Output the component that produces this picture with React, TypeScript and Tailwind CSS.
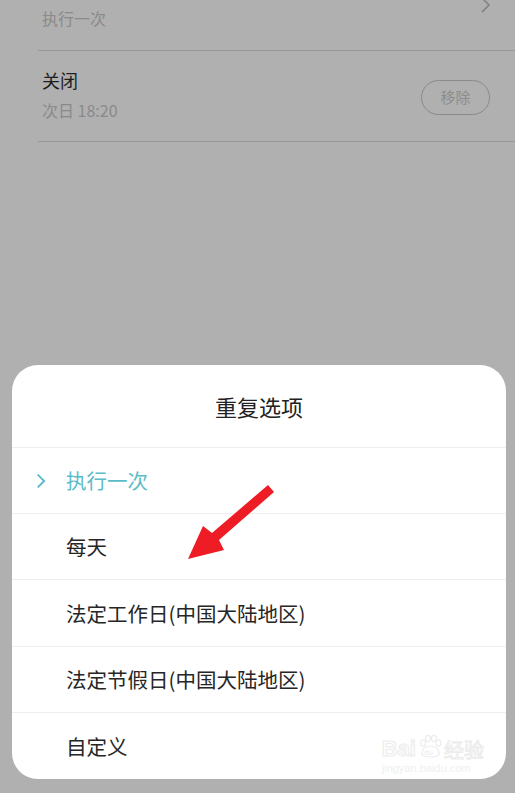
import React from "react";

const font = { fontFamily: '"Noto Sans CJK SC", "Noto Sans", sans-serif' };

function Chevron({ className, sw = 1.6 }: { className?: string; sw?: number }) {
  return (
    <svg viewBox="0 0 10 16" className={className} fill="none" stroke="currentColor" strokeWidth={sw} strokeLinecap="square">
      <path d="M1.5 1.5 L8 8 L1.5 14.5" />
    </svg>
  );
}

const options = [
  { t: "每天", h: "h-[66px] border-b" },
  { t: "法定工作日(中国大陆地区)", h: "h-[67px] border-b" },
  { t: "法定节假日(中国大陆地区)", h: "h-[66px] border-b" },
  { t: "自定义", h: "h-[66px]" },
];

export default function App() {
  return (
    <div className="relative w-[515px] h-[793px] bg-[#b0b0b0] overflow-hidden flex flex-col" style={font}>
      {/* background list (dimmed) */}
      <div className="ml-[38px] flex flex-col">
        <div className="h-[51px] border-b border-[#989898] flex justify-between pl-[4px]">
          <div className="pt-[5px] text-[16px] leading-[26px] text-[#8a8a8a]">执行一次</div>
          <Chevron className="w-[10px] h-[16px] -mt-[3px] mr-[24px] text-[#838383]" />
        </div>
        <div className="h-[91px] border-b border-[#989898] flex items-center justify-between pl-[4px] pr-[25px]">
          <div className="flex flex-col -mt-[4px]">
            <div className="text-[18px] leading-[26px] text-[#1e1e1e]">关闭</div>
            <div className="text-[16px] leading-[24px] mt-[5px] text-[#8a8a8a]">次日 18:20</div>
          </div>
          <div className="w-[69px] h-[35px] mt-[3px] rounded-full border border-[#8a8a8a] flex items-center justify-center text-[15px] text-[#8c8c8c]">
            移除
          </div>
        </div>
      </div>

      {/* bottom sheet */}
      <div className="relative mt-auto mb-[14px] ml-[12px] w-[494px] h-[414px] bg-white rounded-[26px] flex flex-col overflow-hidden">
        <div className="h-[83px] flex items-center justify-center border-b border-[#efefef] text-[22px] text-[#222222]">
          重复选项
        </div>
        <div className="h-[66px] flex items-center border-b border-[#efefef] text-[20.5px] text-[#5bbcc8]">
          <Chevron className="w-[9px] h-[14px] ml-[25px] text-[#5bbcc8]" sw={2.2} />
          <span className="ml-[20px]">执行一次</span>
        </div>
        {options.map((o) => (
          <div key={o.t} className={`${o.h} flex items-center pl-[54px] border-[#efefef] text-[20.5px] text-[#262626]`}>
            {o.t}
          </div>
        ))}

        {/* watermark */}
        <div className="absolute right-[22px] bottom-[4px] flex flex-col items-start select-none">
          <div className="flex items-end leading-none">
            <span className="text-[22px] font-bold" style={{ fontFamily: '"Liberation Sans", Arial, sans-serif', WebkitTextStroke: "1px #ececec", color: "#fdfdfd" }}>Bai</span>
            <svg viewBox="0 0 26 26" className="w-[26px] h-[26px] mx-[1px]" fill="none" stroke="#ececec" strokeWidth={1.2}>
              <ellipse cx="6" cy="9" rx="2.5" ry="3.2" />
              <ellipse cx="11" cy="4.5" rx="2.5" ry="3.2" />
              <ellipse cx="17" cy="4.5" rx="2.5" ry="3.2" />
              <ellipse cx="21.5" cy="9" rx="2.5" ry="3.2" />
              <path d="M5 20 C5 14 9 12 13.5 12 C18 12 22 14 22 20 C22 24 5 24 5 20 Z" />
              <text x="7" y="21" fontSize="8" fill="#ececec" stroke="none" fontFamily="Liberation Sans, sans-serif">du</text>
            </svg>
            <span className="text-[20px]" style={{ WebkitTextStroke: "1px #ececec", color: "#fdfdfd" }}>经验</span>
          </div>
          <div className="text-[11px] leading-[14px] text-[#efefef] mt-[1px]" style={{ fontFamily: '"Liberation Sans", Arial, sans-serif' }}>
            jingyan.baidu.com
          </div>
        </div>
      </div>

      {/* red annotation arrow */}
      <svg className="absolute left-0 top-0 w-[515px] h-[793px] pointer-events-none" viewBox="0 0 515 793">
        <path d="M268 485 L274 492 L219 540 L224 550 L188 559 L203 526 L212 533 Z" fill="#ee1c25" />
      </svg>
    </div>
  );
}
